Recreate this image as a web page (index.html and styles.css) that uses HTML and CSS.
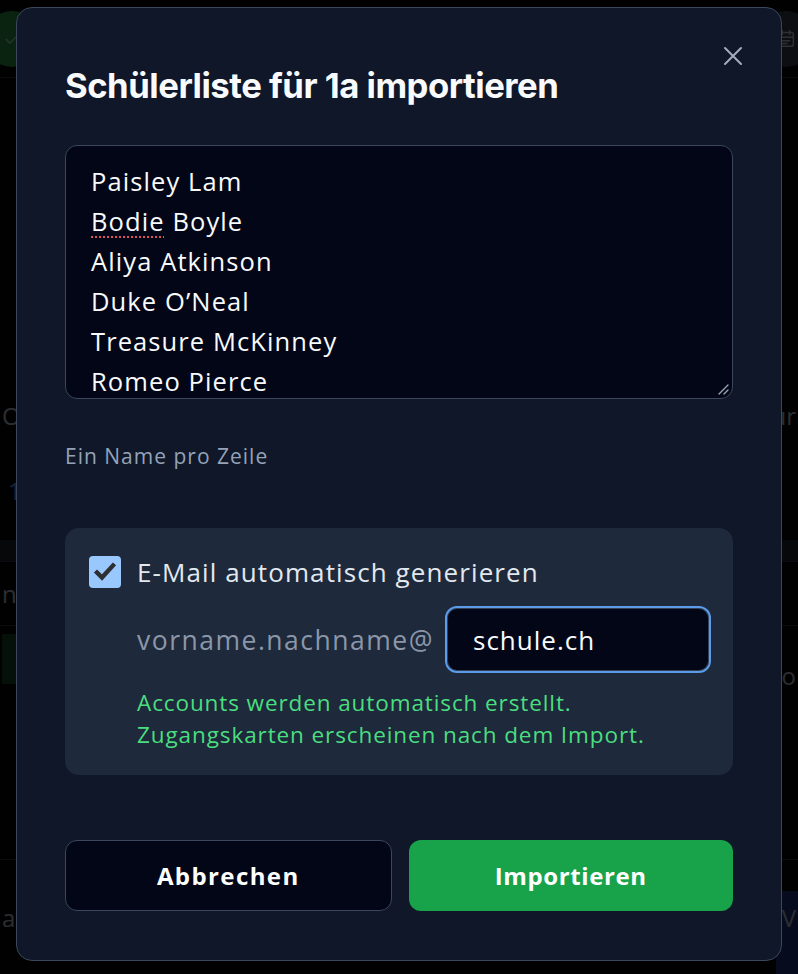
FILE: index.html
```html
<!DOCTYPE html>
<html lang="de">
<head>
<meta charset="utf-8">
<title>Schülerliste importieren</title>
<link rel="stylesheet" href="styles.css">
</head>
<body>
<div class="page" aria-hidden="true">
  <header class="page-head">
    <span class="fab fab-green">
      <svg viewBox="0 0 24 24" width="20" height="20"><path d="M5 12.5l4.5 4.5L19 7.5" fill="none" stroke="#9be3b0" stroke-width="2" stroke-linecap="round" stroke-linejoin="round"/></svg>
    </span>
    <span class="fab fab-gray">
      <svg viewBox="0 0 24 24" width="22" height="22"><rect x="4" y="5" width="16" height="15" rx="2" fill="none" stroke="#cbd5e1" stroke-width="1.6"/><path d="M4 10h16M8 3v4M16 3v4M8 14h8M8 17h5" stroke="#cbd5e1" stroke-width="1.6" stroke-linecap="round"/></svg>
    </span>
  </header>
  <div class="page-row row-title"><span>Op</span><span>ur</span></div>
  <div class="page-row row-num"><span class="blue">1</span><span></span></div>
  <div class="page-band"></div>
  <div class="page-row row-name"><span>n</span><span></span></div>
  <div class="page-row row-green"><span class="green-cell"></span><span>o</span></div>
  <div class="page-row row-foot"><span>a</span><span class="blue-cell">V</span></div>
</div>

<div class="backdrop">
  <div class="modal" role="dialog" aria-labelledby="dlg-title">
    <div class="modal-head">
      <h2 class="modal-title" id="dlg-title">Schülerliste für 1a importieren</h2>
      <button class="close" aria-label="Schliessen">
        <svg viewBox="0 0 20 20" width="20" height="20"><path d="M2 2L18 18M18 2L2 18" stroke="#a3adbb" stroke-width="2" stroke-linecap="round"/></svg>
      </button>
    </div>

    <div class="names" role="textbox" aria-multiline="true">
      <div>Paisley Lam</div>
      <div><span class="spell">Bodie</span> Boyle</div>
      <div>Aliya Atkinson</div>
      <div>Duke O’Neal</div>
      <div>Treasure McKinney</div>
      <div>Romeo Pierce</div>
      <svg class="grip" viewBox="0 0 12 12" width="12" height="12"><path d="M2 11L11 2M7 11L11 7" stroke="#9aa3b0" stroke-width="1.4" stroke-linecap="round"/></svg>
    </div>

    <p class="hint">Ein Name pro Zeile</p>

    <div class="panel">
      <label class="check-row">
        <span class="check">
          <svg viewBox="0 0 32 32" width="32" height="32"><path d="M8 16.5l5 5 11-12" fill="none" stroke="#2d2f33" stroke-width="4.4" stroke-linecap="square" stroke-linejoin="miter"/></svg>
        </span>
        <span class="check-label">E-Mail automatisch generieren</span>
      </label>
      <div class="email-row">
        <span class="prefix">vorname.nachname@</span>
        <div class="domain">schule.ch</div>
      </div>
      <p class="note">Accounts werden automatisch erstellt.<br>Zugangskarten erscheinen nach dem Import.</p>
    </div>

    <div class="actions">
      <button class="btn btn-cancel">Abbrechen</button>
      <button class="btn btn-primary">Importieren</button>
    </div>
  </div>
</div>
</body>
</html>
```
FILE: styles.css
```css
* { box-sizing: border-box; }
html, body { margin: 0; padding: 0; background: #000; }
body {
  width: 798px;
  height: 974px;
  overflow: hidden;
  font-family: "Open Sans", "Noto Sans", sans-serif;
  color: #f1f5f9;
}

/* background page (dimmed by backdrop) */
.page {
  width: 798px;
  height: 974px;
  background: #05070b;
  display: flex;
  flex-direction: column;
  color: #c4ccd8;
  font-size: 24px;
}
.page-head {
  height: 78px;
  flex: none;
  display: flex;
  justify-content: space-between;
  align-items: center;
  border-bottom: 1px solid #2a3444;
  margin: 0 -16px;
}
.fab {
  width: 56px;
  height: 56px;
  border-radius: 50%;
  display: flex;
  align-items: center;
  justify-content: center;
}
.fab-green { background: #2f9a4c; }
.fab-gray { background: #3b4250; }
.page-row {
  display: flex;
  justify-content: space-between;
  align-items: center;
  padding: 0 2px;
  flex: none;
}
.row-title { height: 72px; margin-top: 301px; }
.row-num { height: 79px; }
.blue { color: #60a5fa; padding-left: 6px; }
.page-band { height: 22px; flex: none; background: #1c2430; margin-top: 10px; border-bottom: 1px solid #2a3444; }
.row-name { height: 64px; border-bottom: 1px solid #2a3444; }
.row-green { height: 72px; align-items: flex-end; padding-bottom: 6px; }
.green-cell { width: 18px; height: 50px; background: #124a26; align-self: center; }
.row-foot {
  flex: 1;
  margin-top: 161px;
  border-top: 1px solid #2a3444;
  align-items: flex-end;
  padding-right: 0;
}
.row-foot > span:first-child { padding-bottom: 40px; }
.blue-cell { background: #1e3a8a; padding: 10px 2px 40px 6px; }

/* overlay */
.backdrop {
  position: fixed;
  inset: 0;
  background: rgba(0, 0, 0, 0.78);
  display: flex;
  justify-content: center;
  align-items: flex-start;
  padding-top: 7px;
}
.modal {
  width: 766px;
  height: 954px;
  background: #0f1729;
  border: 1px solid #3a475c;
  border-radius: 16px;
  padding: 28px 48px 49px;
  display: flex;
  flex-direction: column;
}
.modal-head {
  display: flex;
  justify-content: space-between;
  align-items: flex-start;
  height: 68px;
  flex: none;
}
.modal-title {
  margin: 30px 0 0;
  font-family: Inter, "Liberation Sans", sans-serif;
  font-weight: 700;
  font-size: 34.7px;
  line-height: 38px;
  letter-spacing: -0.5px;
  color: #f8fafc;
}
.close {
  width: 40px;
  height: 40px;
  margin-right: -20px;
  background: none;
  border: 0;
  padding: 0;
  display: flex;
  align-items: center;
  justify-content: center;
}

.names {
  position: relative;
  flex: none;
  margin-top: 41px;
  height: 254px;
  overflow: hidden;
  background: #020617;
  border: 1.5px solid #3a475c;
  border-radius: 12px;
  padding: 15px 24px 0 25px;
  font-size: 25.5px;
  line-height: 40px;
  letter-spacing: 1.1px;
  color: #f8fafc;
}
.spell {
  text-decoration: underline dotted #e05252;
  text-decoration-thickness: 2px;
  text-underline-offset: 5px;
}
.grip {
  position: absolute;
  right: 3px;
  bottom: 3px;
}

.hint {
  margin: 43px 0 0;
  font-size: 21px;
  line-height: 28px;
  letter-spacing: 1px;
  color: #94a3b8;
}

.panel {
  flex: none;
  margin-top: 58px;
  background: #1e293b;
  border-radius: 14px;
  padding: 28px 22px 24px 24px;
}
.check-row {
  display: flex;
  align-items: center;
  gap: 16px;
  height: 32px;
}
.check {
  width: 32px;
  height: 32px;
  flex: none;
  border-radius: 4px;
  background: #99c8ff;
  display: flex;
}
.check-label {
  font-size: 26px;
  letter-spacing: 1.1px;
  color: #e2e8f0;
}
.email-row {
  margin-top: 18px;
  padding-left: 48px;
  display: flex;
  align-items: center;
  justify-content: space-between;
}
.prefix {
  font-size: 26.5px;
  letter-spacing: 1.5px;
  color: #8b97a9;
}
.domain {
  width: 266px;
  height: 67px;
  flex: none;
  background: #020617;
  border: 2px solid #5b9be8;
  box-shadow: inset 0 0 0 1px #334155;
  border-radius: 12px;
  padding: 0 26px;
  display: flex;
  align-items: center;
  font-size: 26px;
  letter-spacing: 1px;
  color: #f8fafc;
}
.note {
  margin: 14px 0 0;
  padding-left: 48px;
  font-size: 22.5px;
  line-height: 32px;
  letter-spacing: 0.9px;
  color: #4ade80;
}

.actions {
  margin-top: 65px;
  display: flex;
  gap: 17px;
}
.btn {
  flex: 1;
  height: 71px;
  border-radius: 12px;
  font-family: "Open Sans", "Noto Sans", sans-serif;
  font-weight: 700;
  font-size: 24px;
  letter-spacing: 0.6px;
  color: #ffffff;
}
.btn-cancel {
  background: #020617;
  border: 1.5px solid #3a475c;
  letter-spacing: 1.4px;
}
.btn-primary {
  background: #18a34a;
  border: 0;
}
```
